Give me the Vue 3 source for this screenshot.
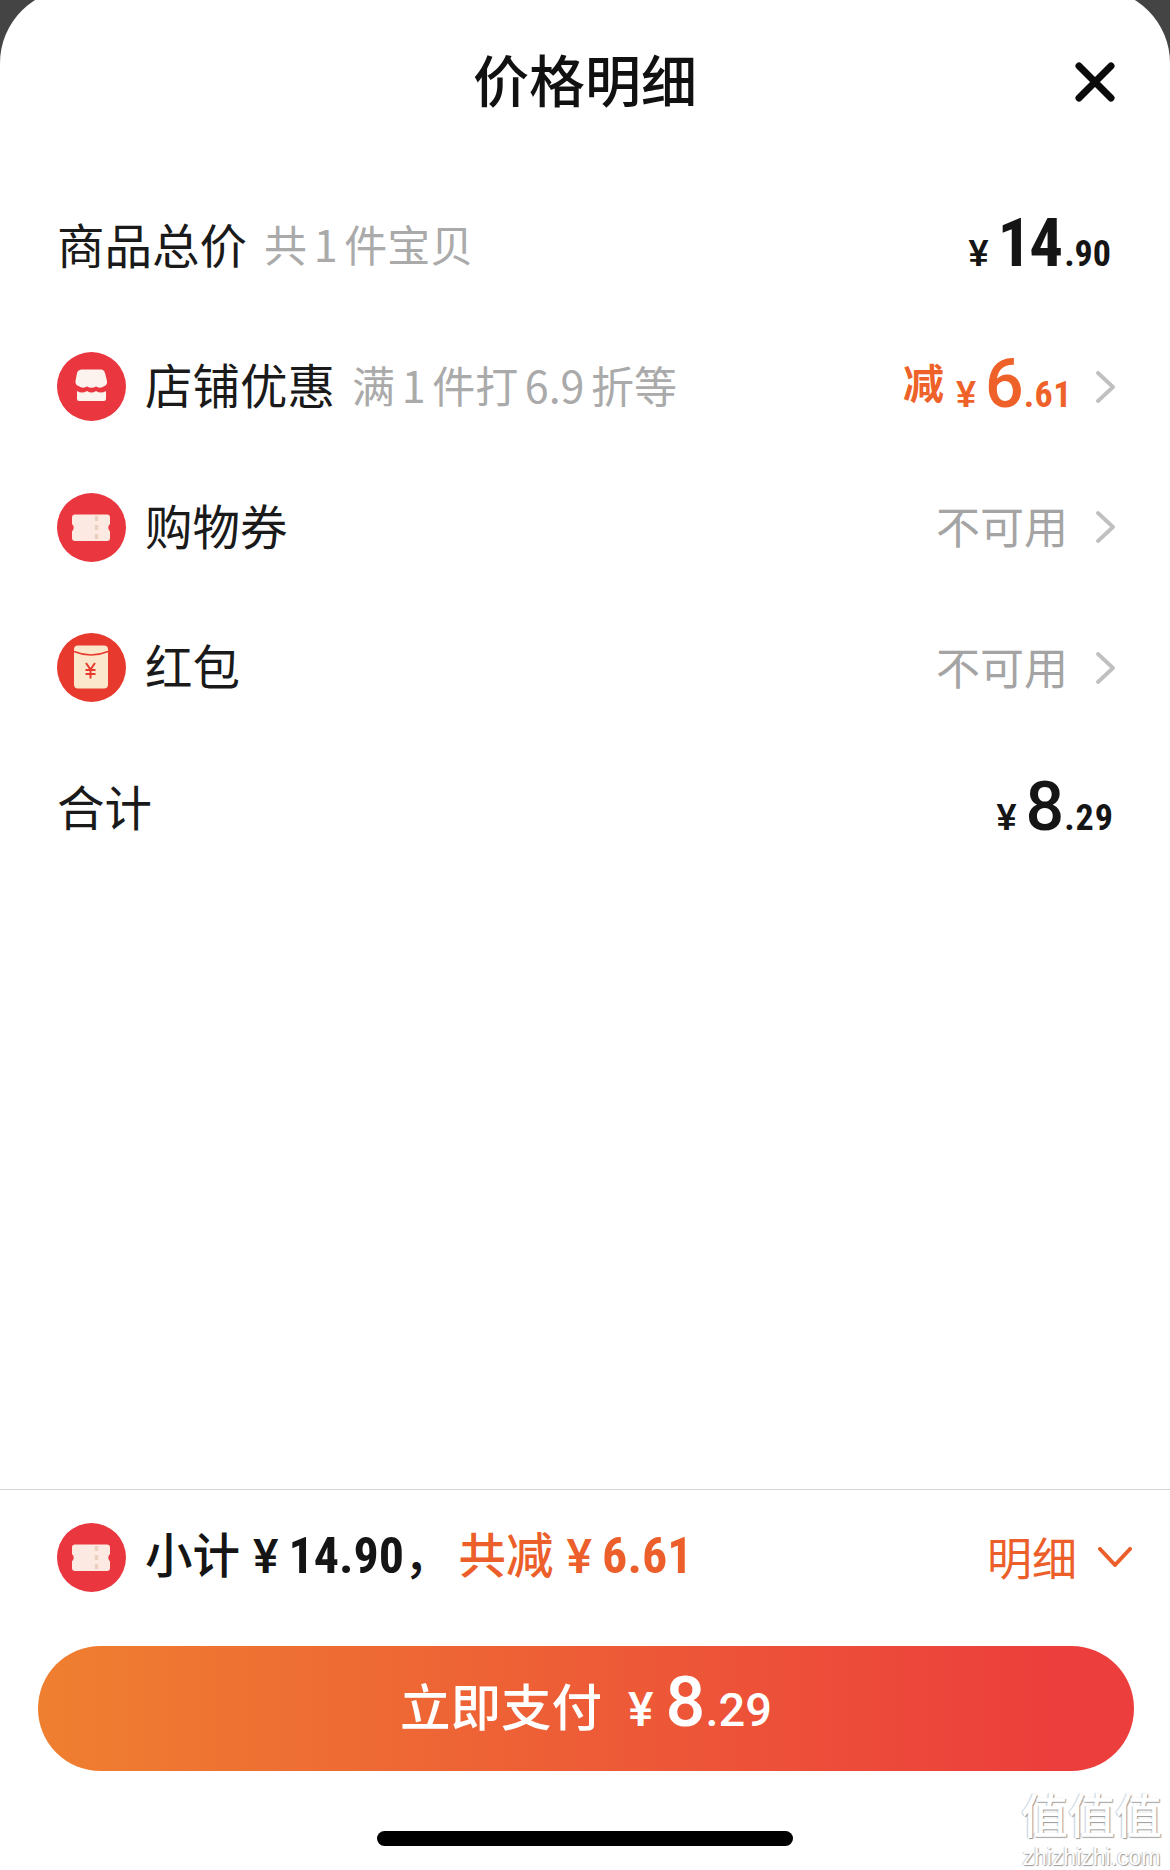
<script setup>
const rows = [
  { id: 'shop', icon: 'shop', label: '店铺优惠', note: '满 1 件打 6.9 折等', discount: ['6', '.61'] },
  { id: 'coupon', icon: 'ticket', label: '购物券', unavailable: true },
  { id: 'hongbao', icon: 'packet', label: '红包', unavailable: true }
]
</script>

<template>
  <div class="page">
    <div class="sheet">
      <header class="head">
        <h1>价格明细</h1>
        <svg class="close" viewBox="0 0 40 40">
          <path d="M4 4 L36 36 M36 4 L4 36" fill="none" stroke="#0a0a0a" stroke-width="7" stroke-linecap="round" />
        </svg>
      </header>

      <section class="rows">
        <div class="row">
          <span class="label">商品总价</span>
          <span class="note">共 1 件宝贝</span>
          <span class="price total-top"><i class="yen">¥</i><b>14</b><i class="cents">.90</i></span>
        </div>

        <div v-for="row in rows" :key="row.id" class="row">
          <svg class="badge" viewBox="0 0 69 69">
            <template v-if="row.icon === 'shop'">
              <circle cx="34.5" cy="34.5" r="34.5" fill="#e9363f" />
              <path d="M25 17.5 H44 Q47 17.5 48 21 L50 29 Q50.5 33 47.5 34 Q43 37 39 34.5 Q34.5 37 30 34.5 Q26 37 21.5 34 Q18 33 18.5 29 L20 21 Q21 17.5 25 17.5 Z" fill="#fdf3ee" />
              <path d="M20 39 Q25 42 30 39 Q34.5 42 39 39 Q44 42 49 39 V47 Q49 49 47 49 H22 Q20 49 20 47 Z" fill="#fdf3ee" />
            </template>
            <template v-else-if="row.icon === 'ticket'">
              <circle cx="34.5" cy="34.5" r="34.5" fill="#e9363f" />
              <path d="M18 21.5 H50 Q53 21.5 53 24.5 V31 Q49.5 34.7 53 38.5 V45 Q53 48 50 48 H18 Q15 48 15 45 V38.5 Q18.5 34.7 15 31 V24.5 Q15 21.5 18 21.5 Z" fill="#fbe9e2" />
              <path d="M39.5 23 V47" stroke="#ecd0bf" stroke-width="3.4" stroke-dasharray="5 4" fill="none" />
            </template>
            <template v-else>
              <circle cx="34.5" cy="34.5" r="34.5" fill="#e8392e" />
              <rect x="17" y="12.5" width="34" height="43" rx="4" fill="#fbe8cc" />
              <path d="M17 18.5 Q34 25.5 51 18.5" fill="none" stroke="#e8392e" stroke-width="1.6" />
              <path d="M29 30 L33.5 36.5 L38 30 M28.5 37 H38.5 M28.5 41 H38.5 M33.5 36.5 V45.5" stroke="#e8392e" stroke-width="2" fill="none" />
            </template>
          </svg>
          <span class="label">{{ row.label }}</span>
          <span v-if="row.note" class="note">{{ row.note }}</span>
          <span v-if="row.discount" class="price minus">
            <em>减</em><i class="yen">¥</i><b>{{ row.discount[0] }}</b><i class="cents">{{ row.discount[1] }}</i>
          </span>
          <span v-else class="na">不可用</span>
          <svg class="chev" :class="{ tight: row.discount }" viewBox="0 0 19 32">
            <path d="M2 2 L17 16 L2 30" fill="none" stroke="#c0c0c0" stroke-width="3.8" stroke-linecap="round" stroke-linejoin="round" />
          </svg>
        </div>

        <div class="row">
          <span class="label">合计</span>
          <span class="price total-sum"><i class="yen">¥</i><b>8</b><i class="cents">.29</i></span>
        </div>
      </section>

      <footer class="foot">
        <div class="summary">
          <svg class="badge" viewBox="0 0 69 69">
            <circle cx="34.5" cy="34.5" r="34.5" fill="#e9363f" />
            <path d="M18 21.5 H50 Q53 21.5 53 24.5 V31 Q49.5 34.7 53 38.5 V45 Q53 48 50 48 H18 Q15 48 15 45 V38.5 Q18.5 34.7 15 31 V24.5 Q15 21.5 18 21.5 Z" fill="#fbe9e2" />
            <path d="M39.5 23 V47" stroke="#ecd0bf" stroke-width="3.4" stroke-dasharray="5 4" fill="none" />
          </svg>
          <span class="sub black">小计<i class="sub-yen">¥</i><i class="sub-num">14.90</i>，</span>
          <span class="sub orange">共减<i class="sub-yen">¥</i><i class="sub-num">6.61</i></span>
          <span class="detail">明细</span>
          <svg class="down" viewBox="0 0 34 21">
            <path d="M2 2 L17 18 L32 2" fill="none" stroke="#ec5f2a" stroke-width="4" stroke-linecap="round" stroke-linejoin="round" />
          </svg>
        </div>
        <button class="pay">
          <span class="pay-text">立即支付</span><i class="pay-yen">¥</i><b>8</b><i class="pay-cents">.29</i>
        </button>
        <div class="home-wrap"><div class="home"></div></div>
      </footer>

      <div class="mark">
        <span class="mark-cn">值值值</span>
        <span class="mark-en">zhizhizhi.com</span>
      </div>
    </div>
  </div>
</template>

<style>
html, body { margin: 0; background: #444; }
</style>

<style scoped>
.page {
  width: 1170px; height: 1870px; overflow: hidden; background: #444;
  font-family: "Noto Sans CJK SC", "Noto Sans", sans-serif;
}
.sheet {
  position: relative; height: 1881px; margin-top: -11px; padding-top: 11px; box-sizing: border-box;
  background: #fff; border-radius: 74px 74px 0 0;
  display: flex; flex-direction: column;
}
.head { height: 160px; flex: none; display: flex; align-items: flex-start; justify-content: center; position: relative; }
.head h1 { margin: 40px 0 0; font-size: 56px; line-height: 76px; font-weight: 500; color: #111; }
.close { position: absolute; right: 55px; top: 62px; width: 40px; height: 40px; }

.rows { flex: 1; padding: 16px 55px 0 57px; }
.row { height: 140.5px; display: flex; align-items: center; }
.label { font-size: 47.5px; color: #1a1a1a; margin-bottom: 6px; }
.note { font-size: 43px; color: #aaa; margin-left: 17px; margin-bottom: 6px; word-spacing: -3px; }
.badge { width: 69px; height: 69px; margin-right: 19px; flex: none; }

.price { margin-left: auto; display: flex; align-items: baseline; color: #151515; font-family: Roboto, sans-serif; font-stretch: 75%; }
.price i { font-style: normal; }
.yen { font-family: "Liberation Sans", sans-serif; font-size: 36px; font-weight: 700; margin-right: 9px; }
.price b { font-size: 68px; font-weight: 500; font-stretch: 100%; }
.cents { font-size: 36px; font-weight: 700; }
.total-top { margin-right: 4px; margin-bottom: 7px; }
.total-top b { font-size: 67px; font-weight: 700; font-stretch: 75%; letter-spacing: -2px; margin-right: 3px; }
.total-sum { margin-right: 1px; margin-bottom: 2px; }
.total-sum .cents { letter-spacing: 1px; }
.minus { color: #ee6229; margin-bottom: 5px; }
.minus .cents { letter-spacing: .5px; }
.minus em { position: relative; top: -8px; font-style: normal; font-family: "Noto Sans CJK SC", sans-serif; font-size: 41px; font-weight: 700; margin-right: 12px; }
.na { margin-left: auto; font-size: 44px; color: #a4a4a4; margin-bottom: 4px; }
.chev { width: 19px; height: 32px; margin-left: 28px; flex: none; }
.chev.tight { margin-left: 24px; }

.foot { flex: none; border-top: 1px solid #d4d4d4; padding-bottom: 24px; }
.summary { display: flex; align-items: center; height: 134px; padding: 0 38px 0 57px; }
.sub { font-size: 47.5px; font-weight: 500; display: flex; align-items: baseline; margin-bottom: 10px; }
.sub i { font-style: normal; }
.black { color: #151515; }
.orange { color: #ec5f2a; margin-left: 7px; }
.sub-yen { margin: 0 10px 0 13px; font-family: Roboto, sans-serif; font-size: 48px; font-weight: 500; }
.sub-num { font-family: Roboto, sans-serif; font-stretch: 75%; font-size: 50px; font-weight: 700; }
.detail { margin-left: auto; font-size: 45px; color: #ec5f2a; margin-bottom: 2px; }
.down { width: 34px; height: 21px; margin-left: 21px; flex: none; }

.pay {
  display: flex; align-items: baseline; justify-content: center;
  margin: 22px 36px 0 38px; width: 1096px; height: 125px; padding: 15px 0 0; box-sizing: border-box;
  border: 0; border-radius: 63px; color: #fff;
  background: linear-gradient(90deg, #ef7f30, #ec3e3c 93%);
  font-family: Roboto, sans-serif;
}
.pay i { font-style: normal; }
.pay-text { font-family: "Noto Sans CJK SC", sans-serif; font-size: 50.5px; font-weight: 500; margin-right: 26px; }
.pay-yen { font-size: 48px; font-weight: 500; margin-right: 12px; }
.pay b { font-size: 70px; font-weight: 500; }
.pay-cents { font-size: 47px; font-weight: 500; }
.home-wrap { display: flex; justify-content: center; padding-top: 60px; }
.home { width: 416px; height: 15px; border-radius: 8px; background: #000; }

.mark {
  position: absolute; right: 8px; top: 1803px; display: flex; flex-direction: column; align-items: center;
  color: #fff; text-shadow: 1px 1px 1px #999, -1px 0 1px #ccc;
}
.mark-cn { font-family: "Liberation Sans", "Noto Sans CJK SC", sans-serif; font-size: 47px; line-height: 50px; font-weight: 500; }
.mark-en { margin-top: 3px; font-size: 23px; line-height: 24px; font-family: "Liberation Sans", sans-serif; }
</style>
